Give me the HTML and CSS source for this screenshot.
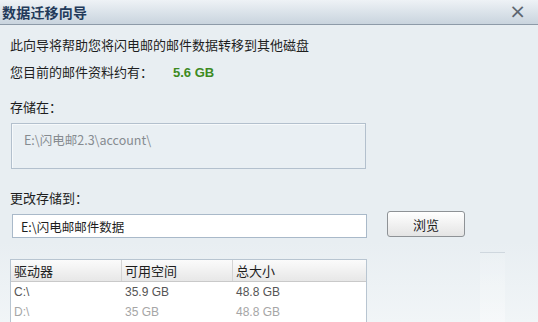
FILE: index.html
```html
<!DOCTYPE html>
<html lang="zh-CN">
<head>
    <meta charset="UTF-8">
    <title>数据迁移向导</title>
    <link rel="stylesheet" href="styles.css">
</head>
<body>
    <div class="dialog">
        <div class="titlebar">
            <span class="title">数据迁移向导</span>
            <span class="close-btn">&times;</span>
        </div>
        <div class="content">
            <p class="intro">此向导将帮助您将闪电邮的邮件数据转移到其他磁盘</p>
            <p class="size-line">您目前的邮件资料约有：<span class="size">5.6 GB</span></p>

            <p class="label">存储在：</p>
            <div class="current-path">E:\闪电邮2.3\account\</div>

            <p class="label label-change">更改存储到：</p>
            <div class="target-row">
                <input class="target-path" type="text" value="E:\闪电邮邮件数据">
                <button class="browse-btn">浏览</button>
            </div>

            <!-- 磁盘列表 -->
            <div class="drives">
                <div class="drives-head">
                    <span class="col col-drive">驱动器</span>
                    <span class="col col-free">可用空间</span>
                    <span class="col col-total">总大小</span>
                </div>
                <div class="drive-row">
                    <span class="col col-drive">C:\</span>
                    <span class="col col-free">35.9 GB</span>
                    <span class="col col-total">48.8 GB</span>
                </div>
                <div class="drive-row disabled">
                    <span class="col col-drive">D:\</span>
                    <span class="col col-free">35 GB</span>
                    <span class="col col-total">48.8 GB</span>
                </div>
            </div>
        </div>
        <div class="corner-deco"></div>
    </div>
</body>
</html>
```

FILE: styles.css
```css
* {
    margin: 0;
    padding: 0;
    box-sizing: border-box;
}
body {
    font-family: "Noto Sans CJK SC", "Liberation Sans", sans-serif;
    font-size: 13px;
    color: #1e1e1e;
    background-color: #e8eef2;
}
.dialog {
    position: relative;
    width: 538px;
    height: 322px;
    overflow: hidden;
    background: linear-gradient(to bottom, #e8eef2 0%, #e8eef2 75%, #f1f5f7 100%);
}
/* 标题栏 */
.titlebar {
    height: 25px;
    display: flex;
    align-items: center;
    justify-content: space-between;
    padding: 0 12px 0 2px;
    background: linear-gradient(to bottom, #eef2f6, #c9d4de);
    border-bottom: 1px solid #8d9aa8;
}
.title {
    font-size: 14px;
    font-weight: bold;
    color: #233a5a;
    letter-spacing: 0.2px;
}
.close-btn {
    font-family: "DejaVu Sans", sans-serif;
    font-size: 20px;
    line-height: 1;
    color: #5c6570;
    margin-top: -3px;
}
.content {
    padding: 0 0 0 10px;
}
.intro {
    margin-top: 10px;
    line-height: 20px;
}
.size-line {
    margin-top: 7px;
    line-height: 20px;
}
.size {
    margin-left: 20px;
    font-family: "Liberation Sans", sans-serif;
    font-size: 13px;
    font-weight: bold;
    color: #3d8a1f;
}
.label {
    margin-top: 14px;
    line-height: 20px;
}
.label-change {
    margin-top: 19px;
}
.current-path {
    margin-top: 6px;
    margin-left: 1px;
    width: 355px;
    height: 46px;
    padding: 6px 0 0 12px;
    border: 1px solid #b3c0cd;
    box-shadow: inset 1px 1px 0 #f6f9fb;
    background-color: #e9eff3;
    color: #868b90;
    font-size: 12.5px;
}
.target-row {
    display: flex;
    align-items: flex-start;
    margin-top: 3px;
}
.target-path {
    margin-top: 3px;
    margin-left: 2px;
    width: 355px;
    height: 24px;
    padding: 0 8px;
    border: 1px solid #a9b9c9;
    background-color: #fff;
    font-family: inherit;
    font-size: 12.5px;
    color: #1e1e1e;
    outline: none;
}
.browse-btn {
    margin-left: 20px;
    width: 78px;
    height: 26px;
    border: 1px solid #8e9296;
    border-radius: 3px;
    background: linear-gradient(to bottom, #ffffff, #e4e4e4);
    font-family: inherit;
    font-size: 13px;
    color: #222;
}
/* 磁盘列表 */
.drives {
    margin-top: 21px;
    width: 357px;
    border: 1px solid #b8c5d1;
    border-bottom: none;
    background-color: #fff;
}
.drives-head {
    display: flex;
    height: 22px;
    align-items: center;
    background: linear-gradient(to bottom, #fbfbfb, #e7e7e7);
    border-bottom: 1px solid #c9c9c9;
}
.drives-head .col {
    color: #1e1e1e;
    line-height: 21px;
}
.drives-head .col-drive,
.drives-head .col-free {
    border-right: 1px solid #d4d4d4;
}
.drive-row {
    display: flex;
    height: 20px;
    align-items: center;
    color: #555;
}
.drive-row.disabled {
    color: #a6a6a6;
}
.col {
    padding-left: 3px;
}
.col-drive {
    width: 111px;
}
.col-free {
    width: 111px;
}
.col-total {
    flex: 1;
}
.drive-row .col {
    font-family: "Liberation Sans", sans-serif;
    font-size: 12px;
}
/* 右下角装饰 */
.corner-deco {
    position: absolute;
    left: 480px;
    top: 252px;
    width: 25px;
    height: 70px;
    border-top: 1px solid #cfd7de;
    background: linear-gradient(to bottom, rgba(255,255,255,0.1), rgba(255,255,255,0.35));
}
```
